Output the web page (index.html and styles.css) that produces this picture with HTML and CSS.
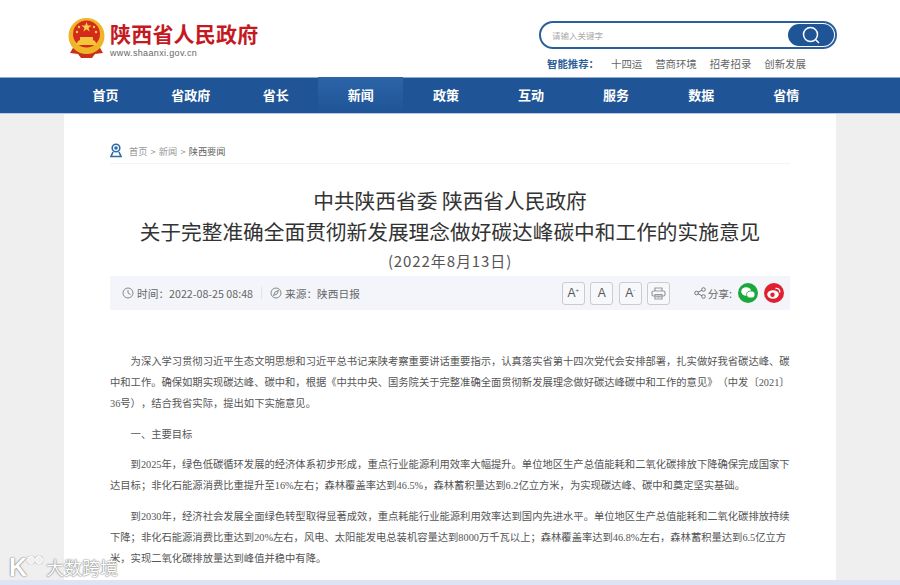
FILE: index.html
```html
<!DOCTYPE html>
<html lang="zh-CN">
<head>
    <meta charset="UTF-8">
    <title>陕西省人民政府</title>
    <link rel="stylesheet" href="styles.css">
</head>
<body>
<div class="top">
    <div class="logo">
        <svg class="emblem" width="37" height="40" viewBox="0 0 37 40">
            <path d="M6 28 L2 35 L10 36 L13 40 L24 40 L27 36 L35 35 L31 28 Z" fill="#c9301c"/>
            <circle cx="18.500" cy="18" r="18" fill="#f0b428"/>
            <circle cx="18.500" cy="16" r="13.500" fill="#d42a1c"/>
            <path d="M8 27 L29 27 L27 23 L25 22 L25 19 L12 19 L12 22 L10 23 Z" fill="#f4c63c"/>
            <path d="M13 32 Q18.500 37 24 32 L21 30 L16 30 Z" fill="#f0b428"/>
            <path d="M18.500 4 l1.300 3.600 3.700 0 -3 2.300 1.100 3.600 -3.100 -2.200 -3.100 2.200 1.100 -3.600 -3 -2.300 3.700 0 z" fill="#f6d04a"/>
            <circle cx="11" cy="9" r="1.200" fill="#f6d04a"/>
            <circle cx="26" cy="9" r="1.200" fill="#f6d04a"/>
            <circle cx="9" cy="14" r="1.200" fill="#f6d04a"/>
            <circle cx="28" cy="14" r="1.200" fill="#f6d04a"/>
        </svg>
        <div class="logo_text">
            <div class="logo_cn">陕西省人民政府</div>
            <div class="logo_en">www.shaanxi.gov.cn</div>
        </div>
    </div>
    <div class="search_box">
        <div class="search">
            <span class="search_hint">请输入关键字</span>
            <span class="search_btn">
                <svg width="20" height="20" viewBox="0 0 20 20" fill="none" stroke="#fff" stroke-width="1.500">
                    <circle cx="9.500" cy="9.500" r="7"/>
                    <path d="M14.500 14.500 L18 18"/>
                </svg>
            </span>
        </div>
        <div class="hot">
            <b>智能推荐：</b>
            <span>十四运</span>
            <span>营商环境</span>
            <span>招考招录</span>
            <span>创新发展</span>
        </div>
    </div>
</div>
<div class="nav">
    <div class="nav_in">
        <a>首页</a>
        <a>省政府</a>
        <a>省长</a>
        <a class="on">新闻</a>
        <a>政策</a>
        <a>互动</a>
        <a>服务</a>
        <a>数据</a>
        <a>省情</a>
    </div>
</div>
<div class="main">
    <div class="crumb">
        <svg width="12" height="15" viewBox="0 0 12 15" fill="none" stroke="#2c6aa8" stroke-width="1.600">
            <circle cx="6" cy="5" r="3.800"/>
            <circle cx="6" cy="5" r="1" fill="#2c6aa8"/>
            <path d="M3 9 L1 13.500 L11 13.500 L9 9"/>
        </svg>
        <span>首页</span><i>&gt;</i><span>新闻</span><i>&gt;</i><span class="cur">陕西要闻</span>
    </div>
    <h1>中共陕西省委 陕西省人民政府<br>关于完整准确全面贯彻新发展理念做好碳达峰碳中和工作的实施意见</h1>
    <div class="date">(2022年8月13日)</div>
    <div class="info">
        <div class="info_l">
            <svg width="12" height="12" viewBox="0 0 12 12" fill="none" stroke="#888" stroke-width="1">
                <circle cx="6" cy="6" r="5"/>
                <path d="M6 3 L6 6 L8.500 7.500"/>
            </svg>
            <span class="t1">时间：2022-08-25 08:48</span>
            <span class="sep"></span>
            <svg width="12" height="12" viewBox="0 0 12 12" fill="none" stroke="#888" stroke-width="1">
                <circle cx="6" cy="6" r="5"/>
                <path d="M8.500 3.500 L5 5 L3.500 8.500 L7 7 Z"/>
            </svg>
            <span class="t1">来源：陕西日报</span>
        </div>
        <div class="info_r">
            <span class="fbtn">A<sup>+</sup></span>
            <span class="fbtn">A</span>
            <span class="fbtn">A<sup>-</sup></span>
            <span class="fbtn">
                <svg width="15" height="13" viewBox="0 0 15 13" fill="none" stroke="#999" stroke-width="1.200">
                    <path d="M4 4 L4 1 L11 1 L11 4"/>
                    <rect x="1" y="4" width="13" height="5" rx="1.500"/>
                    <path d="M4 7.500 L11 7.500 L11 12 L4 12 Z M5.500 9.800 L9.500 9.800"/>
                </svg>
            </span>
            <svg class="share_ic" width="12" height="12" viewBox="0 0 12 12" fill="none" stroke="#777" stroke-width="1">
                <circle cx="2.500" cy="6" r="1.800"/>
                <circle cx="9.500" cy="2.500" r="1.800"/>
                <circle cx="9.500" cy="9.500" r="1.800"/>
                <path d="M4 5.200 L8 3.300 M4 6.800 L8 8.700"/>
            </svg>
            <span class="t1">分享:</span>
            <span class="round wx">
                <svg width="14" height="12" viewBox="0 0 14 12" fill="#fff">
                    <ellipse cx="5.200" cy="4.500" rx="5" ry="4.200"/>
                    <ellipse cx="9.800" cy="7.500" rx="4.200" ry="3.500" stroke="#1aa83c" stroke-width="0.800"/>
                </svg>
            </span>
            <span class="round wb">
                <svg width="14" height="12" viewBox="0 0 14 12" fill="#fff">
                    <ellipse cx="6" cy="7.500" rx="5.800" ry="4.200"/>
                    <circle cx="5.500" cy="7.800" r="2.200" fill="#e0202e"/>
                    <path d="M8.500 1.500 Q13 1 12.800 5.500" fill="none" stroke="#fff" stroke-width="1.300"/>
                </svg>
            </span>
        </div>
    </div>
    <div class="article">
        <p>为深入学习贯彻习近平生态文明思想和习近平总书记来陕考察重要讲话重要指示，认真落实省第十四次党代会安排部署，扎实做好我省碳达峰、碳中和工作。确保如期实现碳达峰、碳中和，根据《中共中央、国务院关于完整准确全面贯彻新发展理念做好碳达峰碳中和工作的意见》（中发〔2021〕36号），结合我省实际，提出如下实施意见。</p>
        <p>一、主要目标</p>
        <p>到2025年，绿色低碳循环发展的经济体系初步形成，重点行业能源利用效率大幅提升。单位地区生产总值能耗和二氧化碳排放下降确保完成国家下达目标；非化石能源消费比重提升至16%左右；森林覆盖率达到46.5%，森林蓄积量达到6.2亿立方米，为实现碳达峰、碳中和奠定坚实基础。</p>
        <p>到2030年，经济社会发展全面绿色转型取得显著成效，重点耗能行业能源利用效率达到国内先进水平。单位地区生产总值能耗和二氧化碳排放持续下降；非化石能源消费比重达到20%左右，风电、太阳能发电总装机容量达到8000万千瓦以上；森林覆盖率达到46.8%左右，森林蓄积量达到6.5亿立方米，实现二氧化碳排放量达到峰值并稳中有降。</p>
    </div>
</div>
<div class="foot"></div>
<div class="mark">
    <span class="mark_k">K</span>
    <span class="mark_o"></span>
    <span class="mark_o"></span>
    <span class="mark_t">大数跨境</span>
</div>
</body>
</html>
```
FILE: styles.css
```css
*{box-sizing: border-box;}
html,body{margin: 0;padding: 0;height: 585px;overflow: hidden;}
body{background: #efefef;font-family: "Noto Sans CJK SC","Liberation Sans",sans-serif;color: #444;position: relative;}
.top{height: 77px;background: #fff;padding: 0 63px 0 68px;display: flex;justify-content: space-between;}
.logo{display: flex;padding-top: 18px;}
.emblem{margin-right: 5px;}
.logo_cn{font-size: 21px;line-height: 26px;font-weight: 700;color: #c4191f;margin-top: 2px;letter-spacing: .2px;white-space: nowrap;}
.logo_en{font-family: "Liberation Sans",sans-serif;font-size: 9px;line-height: 12px;color: #666;letter-spacing: .35px;margin-top: 1px;}
.search_box{width: 298px;padding-top: 21px;}
.search{height: 28px;border: 2px solid #2a5f9e;border-radius: 14px;display: flex;justify-content: space-between;align-items: center;padding: 1px;}
.search_hint{font-size: 8.500px;color: #aaa;padding-left: 10px;}
.search_btn{width: 46px;height: 22px;background: #1f5596;border-radius: 11px;display: flex;align-items: center;justify-content: center;}
.hot{display: flex;font-size: 10.400px;line-height: 14px;margin-top: 8px;padding-left: 8px;color: #666;white-space: nowrap;}
.hot b{color: #2f5f98;width: 64px;}
.hot span{margin-right: 13px;}
.nav{height: 37px;background: #1f5596;border-top: 1px solid #8fabd0;border-bottom: 1px solid #b9cae3;}
.nav_in{display: flex;padding-left: 63px;}
.nav_in a{width: 85.100px;height: 35px;line-height: 33px;text-align: center;color: #fff;font-size: 13px;font-weight: 700;}
.nav_in a.on{background: linear-gradient(#2c64a8,#1f5596);height: 36px;margin-top: -1px;padding-top: 1px;}
.main{width: 772px;height: 466px;margin: 0 auto;background: #fff;padding: 0 46px;}
.crumb{height: 50px;border-bottom: 1px solid #f4f4f4;display: flex;align-items: center;font-size: 9.200px;color: #999;padding-top: 24px;}
.crumb svg{margin-right: 7px;}
.crumb i{font-style: normal;margin: 0 3.200px;}
.crumb .cur{color: #666;}
h1{margin: 21px 0 0;text-align: center;font-size: 20.700px;line-height: 31px;font-weight: 400;color: #333;}
.date{text-align: center;font-size: 15px;line-height: 24px;margin-top: 2px;color: #555;letter-spacing: .9px;}
.info{height: 34px;background: #f3f5fa;margin-top: 3px;padding: 0 6px 0 12px;display: flex;align-items: center;justify-content: space-between;}
.info_l,.info_r{display: flex;align-items: center;}
.t1{font-size: 10.700px;color: #666;margin-left: 3px;}
.sep{width: 1px;height: 12px;background: #e3e3e3;margin: 0 8px;}
.info_l svg{flex: none;}
.fbtn{width: 23px;height: 23px;border: 1px solid #ccc;border-radius: 3px;margin-right: 5.500px;display: flex;align-items: center;justify-content: center;font-family: "Liberation Sans",sans-serif;font-size: 12px;color: #555;background: #f7f8fb;}
.fbtn sup{font-size: 6px;line-height: 1;margin-top: -6px;}
.share_ic{margin-left: 18px;margin-right: -1px;}
.round{width: 20px;height: 20px;border-radius: 50%;display: flex;align-items: center;justify-content: center;margin-left: 6px;}
.wx{background: #1aa83c;}
.wb{background: #e0202e;}
.article{padding-top: 41px;font-family: "Liberation Serif","Noto Sans CJK SC",serif;font-size: 10.300px;line-height: 21px;color: #555;text-spacing-trim: space-all;}
.article p{margin: 0 0 9.500px;text-indent: 2em;}
.foot{height: 5px;background: #dde4f4;}
.mark{position: absolute;left: 9px;top: 553px;width: 115px;height: 28px;display: flex;align-items: center;color: #fff;text-shadow: 0 0 1px #666,0 0 2px #888;}
.mark_k{font-family: "Liberation Sans",sans-serif;font-size: 25px;font-weight: 700;line-height: 28px;}
.mark_o{width: 8px;height: 8px;border: 1px solid #fff;border-radius: 50%;box-shadow: 0 0 1px #666;margin: -14px 0 0 0;}
.mark_t{font-size: 18px;line-height: 28px;margin-left: 3px;white-space: nowrap;}
```
